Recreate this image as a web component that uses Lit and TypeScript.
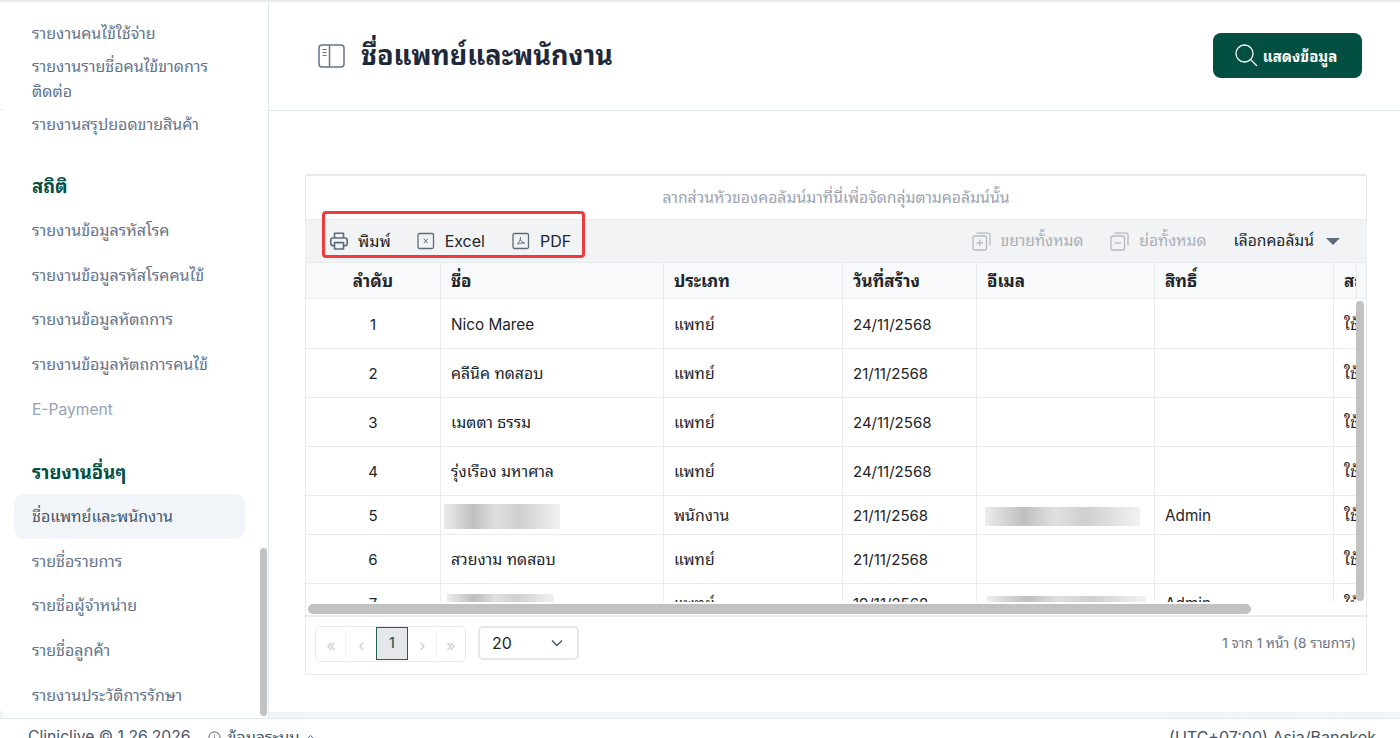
import { LitElement, html, css, svg } from "lit";
import { customElement } from "lit/decorators.js";

const printer = svg`<svg class="ic" viewBox="0 0 20 20" width="20" height="20" fill="none" stroke="#5f6b7a" stroke-width="1.6" stroke-linejoin="round"><path d="M5.500 7V2.200h9V7"/><rect x="1.800" y="7" width="16.400" height="7.600" rx="2"/><rect x="5.500" y="11.600" width="9" height="6.400" fill="#f1f3f5"/></svg>`;
const excel = svg`<svg class="ic" viewBox="0 0 18 18" width="18" height="18" fill="none" stroke="#5f6b7a" stroke-width="1.3"><rect x="1" y="1.500" width="15.500" height="15" rx="1.500"/><path d="M6.800 6.800l4 4.400M10.800 6.800l-4 4.400" stroke-width="1"/></svg>`;
const pdf = svg`<svg class="ic" viewBox="0 0 18 18" width="18" height="18" fill="none" stroke="#5f6b7a" stroke-width="1.3"><rect x="1" y="1.500" width="15.500" height="15" rx="1.500"/><path d="M8.400 5c.5 2.600-1.400 6-3.400 7.200M8.400 7.500c.8 2 2.300 3.300 4.300 3.500-2-.2-4.400.2-6.600 1" stroke-width="1"/></svg>`;
const expand = svg`<svg class="ic" viewBox="0 0 19 19" width="19" height="19" fill="none" stroke="#b4bac1" stroke-width="1.3"><rect x="1" y="4" width="13.500" height="14" rx="1.500"/><path d="M4.500 1.200h12.300a1.200 1.200 0 0 1 1.200 1.200v11"/><path d="M4.500 11h6.500M7.750 7.800v6.400"/></svg>`;
const collapse = svg`<svg class="ic" viewBox="0 0 19 19" width="19" height="19" fill="none" stroke="#b4bac1" stroke-width="1.3"><rect x="1" y="4" width="13.500" height="14" rx="1.500"/><path d="M4.500 1.200h12.300a1.200 1.200 0 0 1 1.200 1.200v11"/><path d="M4.500 11h6.500"/></svg>`;

const group1 = ["รายงานคนไข้ใช้จ่าย", "รายงานรายชื่อคนไข้ขาดการติดต่อ", "รายงานสรุปยอดขายสินค้า"];
const group2 = ["รายงานข้อมูลรหัสโรค", "รายงานข้อมูลรหัสโรคคนไข้", "รายงานข้อมูลหัตถการ", "รายงานข้อมูลหัตถการคนไข้"];
const group3 = ["รายชื่อรายการ", "รายชื่อผู้จำหน่าย", "รายชื่อลูกค้า", "รายงานประวัติการรักษา"];

type Row = { n: number; name: string; type: string; date: string; role: string; h: number; blur?: boolean };
const rows: Row[] = [
  { n: 1, name: "Nico Maree", type: "แพทย์", date: "24/11/2568", role: "", h: 50 },
  { n: 2, name: "คลีนิค ทดสอบ", type: "แพทย์", date: "21/11/2568", role: "", h: 49 },
  { n: 3, name: "เมตตา ธรรม", type: "แพทย์", date: "24/11/2568", role: "", h: 49 },
  { n: 4, name: "รุ่งเรือง มหาศาล", type: "แพทย์", date: "24/11/2568", role: "", h: 49 },
  { n: 5, name: "", type: "พนักงาน", date: "21/11/2568", role: "Admin", h: 39, blur: true },
  { n: 6, name: "สวยงาม ทดสอบ", type: "แพทย์", date: "21/11/2568", role: "", h: 49 },
  { n: 7, name: "", type: "แพทย์", date: "19/11/2568", role: "Admin", h: 39, blur: true },
];

@customElement("app-root")
export class AppRoot extends LitElement {
  static styles = css`
    :host { display: block; width: 1400px; height: 738px; overflow: hidden; background: #fff;
      font-family: Inter, "Noto Sans Thai Looped", "Noto Sans", sans-serif; font-size: 15px; color: #212529; }
    .app { display: flex; flex-direction: column; height: 738px; }
    .top { height: 2px; flex: none; background: #e9eaec; }
    .mid { display: flex; height: 716px; flex: none; }
    .side { width: 268px; flex: none; border-right: 1px solid #e2e8f0; position: relative; overflow: hidden; }
    .side::before { content: ""; position: absolute; left: 0; top: 107px; width: 3px; height: 1px; background: #e2e8f0; }
    .side::after { content: ""; position: absolute; left: 0; top: 709px; width: 3px; height: 7px; background: #f1f5f9; }
    .thumb-s { position: absolute; left: 260px; top: 546px; width: 7px; height: 168px; border-radius: 4px; background: #c1c1c1; }
    .g1 { padding: 15px 0 5px; }
    .it { margin: 0 23px 0 14px; padding: 0 18px; line-height: 25px; color: #64748b; font-size: 16px; }
    .it.dense { padding-top: 4px; padding-bottom: 4px; }
    .it.norm { padding-top: 9.900px; padding-bottom: 9.900px; }
    .it.act { background: #f1f5f9; border-radius: 10px; color: #475569; }
    .it.dis { color: #94a3b8; font-size: 15.600px; }
    .hd { margin: 28.500px 0 9.500px 32px; line-height: 24px; font-size: 18.500px; font-weight: 700; color: #034f42; }
    .hd.first { margin-top: 27.500px; margin-bottom: 10.500px; }
    .main { flex: 1; min-width: 0; display: flex; flex-direction: column; }
    .head { height: 109px; flex: none; box-sizing: border-box; border-bottom: 1px solid #e2e8f0; display: flex; align-items: center; padding: 0 38px 0 49px; }
    .head h1 { margin: 0 0 0 16px; font-size: 27px; font-weight: 700; color: #1e293b; line-height: 32px; }
    .btn { margin: 0 0 2px auto; width: 149px; height: 45px; box-sizing: border-box; padding-right: 4px; border-radius: 8px; background: #034f42; color: #fff; display: flex; align-items: center; justify-content: center; gap: 5px; font-weight: 700; font-size: 15px; }
    .body { flex: 1; padding: 63px 33px 0 36px; }
    .card { height: 501px; box-sizing: border-box; border: 1px solid #e9ecef; border-top-width: 2px; position: relative; display: flex; flex-direction: column; }
    .strip { height: 6px; flex: none; background: #f1f5f9; }
    .grp { height: 44px; flex: none; box-sizing: border-box; display: flex; align-items: center; justify-content: center; color: #9ca3af; font-size: 15.750px; border-bottom: 1px solid #e9ecef; line-height: 24px; }
    .tb { height: 42px; flex: none; background: #f1f3f5; display: flex; align-items: center; padding: 0 26px 0 23px; font-size: 16px; color: #212529; line-height: 24px; }
    .ic { flex: none; display: block; }
    .t { display: flex; align-items: center; gap: 10px; }
    .t.p { gap: 9px; margin-right: 26px; }
    .t.x { margin-right: 27px; }
    .t.e { margin-left: auto; margin-right: 27px; color: #a9afb7; font-size: 15.600px; }
    .t.c { margin-right: 27px; color: #a9afb7; font-size: 15.600px; }
    .t.s { font-size: 15.600px; gap: 10px; }
    .caret { width: 0; height: 0; border-left: 7px solid transparent; border-right: 7px solid transparent; border-top: 7px solid #5f6b7a; margin-left: 2px; }
    .wrap { height: 340px; flex: none; overflow: hidden; position: relative; width: 1050px; line-height: 24px; }
    .row { display: grid; grid-template-columns: 135px 223px 179px 134px 178px 179px 100px; width: 1128px; box-sizing: border-box; font-size: 15.800px; }
    .row > div { box-sizing: border-box; border-right: 1px solid #e9ecef; border-bottom: 1px solid #e9ecef; padding: 2px 0 0 10px; display: flex; align-items: center; white-space: nowrap; overflow: hidden; }
    .row > div.ctr { justify-content: center; padding-left: 0; }
    .row > div.la { font-size: 15px; }
    .row > div.la2 { font-size: 15.300px; }
    .row.th { height: 37px; background: #f8f9fa; border-top: 1px solid #e9ecef; font-weight: 700; color: #212529; font-size: 17px; }
    .row.th > div { padding-top: 0; }
    .blur { background: linear-gradient(90deg, #ececec, #bfbfbf 25%, #e0e0e0 45%, #cfcfcf 65%, #f2f2f2); }
    .b1 { width: 116px; height: 25px; margin-left: -7px; }
    .b2 { width: 155px; height: 19px; margin-left: -2px; }
    .b3 { width: 107px; height: 20px; margin-left: -4px; }
    .b4 { width: 159px; height: 20px; margin-top: 4px; }
    .hbar { height: 15px; flex: none; box-sizing: border-box; position: relative; border-bottom: 2px solid #e9ecef; background: #fff; }
    .hbar i { position: absolute; left: 2px; top: 2px; width: 943px; height: 10px; border-radius: 5px; background: #c1c1c1; }
    .vbar { position: absolute; right: 2px; top: 125px; width: 8px; height: 300px; background: #c1c1c1; border-radius: 4px; }
    .gut2 { position: absolute; left: 1050px; top: 86px; width: 10px; height: 37px; background: #f8f9fa; border-left: 1px solid #e9ecef; border-top: 1px solid #e9ecef; border-bottom: 1px solid #e9ecef; box-sizing: border-box; }
    .foot { flex: 1; display: flex; align-items: flex-start; padding: 9px 10px 0 9px; }
    .pager { display: flex; width: 151px; height: 36px; border: 1px solid #e9ecef; border-radius: 5px; box-sizing: border-box; }
    .pager span { flex: 1; display: flex; align-items: center; justify-content: center; color: #c9ced4; font-size: 16px; padding-top: 2px; box-sizing: border-box; position: relative; }
    .pager span.w { flex: none; width: 30px; }
    .pager span.sep::after { content: ""; position: absolute; right: 0; top: 3px; bottom: 3px; width: 1px; background: #eef0f2; }
    .pager span.cur { flex: none; width: 32px; height: 33px; background: #e5e7eb; border: 1px solid #1f5f50; color: #1f5f50; font-weight: 500; font-size: 14px; padding: 0 0 3px; }
    .sel { margin-left: 12px; width: 101px; height: 34px; box-sizing: border-box; border: 2px solid #e5e7eb; border-radius: 5px; display: flex; align-items: center; justify-content: space-between; padding: 0 14px 0 12px; font-size: 16px; color: #212529; }
    .info { margin-left: auto; color: #6b7280; font-size: 13.600px; line-height: 34px; }
    .ft { height: 20px; flex: none; box-sizing: border-box; border-top: 1px solid #e2e8f0; display: flex; padding: 6px 24px 0 28px; color: #475569; font-size: 16px; line-height: 24px; overflow: hidden; white-space: nowrap; }
    .ft .cp { font-size: 15.700px; }
    .ft .sys { display: flex; align-items: center; height: 24px; gap: 6px; margin-left: 18px; font-size: 16px; }
    .ft .tz { margin-left: auto; }
    .hl { position: absolute; left: 16px; top: 35px; width: 263px; height: 47px; box-sizing: border-box; border: 3px solid #ef3b3b; border-radius: 4px; pointer-events: none; }
  `;

  item(t: string, cls: string) {
    return html`<div class="it ${cls}">${t}</div>`;
  }

  row(r: Row) {
    return html`<div class="row" style="height:${r.h}px">
      <div class="ctr la">${r.n}</div>
      <div class="${r.n === 1 ? "la2" : ""}">${r.blur ? html`<div class="blur ${r.n === 5 ? "b1" : "b3"}"></div>` : r.name}</div>
      <div>${r.type}</div>
      <div class="la">${r.date}</div>
      <div>${r.blur ? html`<div class="blur ${r.n === 5 ? "b2" : "b4"}"></div>` : ""}</div>
      <div class="la2">${r.role}</div>
      <div>ใช้งาน</div>
    </div>`;
  }

  render() {
    return html`<div class="app">
      <div class="top"></div>
      <div class="mid">
        <aside class="side">
          <div class="g1">${group1.map((t) => this.item(t, "dense"))}</div>
          <div class="hd first">สถิติ</div>
          ${group2.map((t) => this.item(t, "norm"))}
          ${this.item("E-Payment", "norm dis")}
          <div class="hd">รายงานอื่นๆ</div>
          ${this.item("ชื่อแพทย์และพนักงาน", "norm act")}
          ${group3.map((t) => this.item(t, "norm"))}
          <div class="thumb-s"></div>
        </aside>
        <main class="main">
          <header class="head">
            <svg viewBox="0 0 27 24" width="27" height="24" fill="none" stroke="#64748b" class="ic">
              <rect x="1" y="1" width="25" height="22" rx="3" stroke-width="1.500"/>
              <path d="M11.500 1v22" stroke-width="1.500"/>
              <path d="M4.500 5.500h4M4.500 8.500h4M4.500 11.500h4" stroke-width="1"/>
            </svg>
            <h1>ชื่อแพทย์และพนักงาน</h1>
            <div class="btn">
              <svg viewBox="0 0 24 24" width="24" height="24" fill="none" stroke="#fff" stroke-width="1.300" class="ic">
                <circle cx="10.500" cy="10.500" r="8.500"/><path d="M16.500 16.500L23 23"/>
              </svg>
              <span>แสดงข้อมูล</span>
            </div>
          </header>
          <div class="body">
            <section class="card">
              <div class="grp">ลากส่วนหัวของคอลัมน์มาที่นี่เพื่อจัดกลุ่มตามคอลัมน์นั้น</div>
              <div class="tb">
                <div class="t p">${printer}<span>พิมพ์</span></div>
                <div class="t x">${excel}<span>Excel</span></div>
                <div class="t">${pdf}<span>PDF</span></div>
                <div class="t e">${expand}<span>ขยายทั้งหมด</span></div>
                <div class="t c">${collapse}<span>ย่อทั้งหมด</span></div>
                <div class="t s"><span style="color:#212529">เลือกคอลัมน์</span><i class="caret"></i></div>
              </div>
              <div class="wrap">
                <div class="row th">
                  <div class="ctr">ลำดับ</div><div>ชื่อ</div><div>ประเภท</div><div>วันที่สร้าง</div><div>อีเมล</div><div>สิทธิ์</div><div>สถานะ</div>
                </div>
                ${rows.map((r) => this.row(r))}
              </div>
              <div class="gut2"></div>
              <div class="vbar"></div>
              <div class="hbar"><i></i></div>
              <div class="foot">
                <div class="pager">
                  <span class="sep w">«</span><span class="w">‹</span><span class="cur">1</span><span class="sep">›</span><span>»</span>
                </div>
                <div class="sel"><span>20</span>
                  <svg viewBox="0 0 12 8" width="12" height="8" fill="none" stroke="#475569" stroke-width="1.400" class="ic"><path d="M1 1.500l5 5 5-5"/></svg>
                </div>
                <div class="info">1 จาก 1 หน้า (8 รายการ)</div>
              </div>
              <div class="hl"></div>
            </section>
          </div>
          <div class="strip"></div>
        </main>
      </div>
      <footer class="ft">
        <span class="cp">Cliniclive © 1.26.2026</span>
        <span class="sys">
          <svg viewBox="0 0 14 14" width="13" height="13" fill="none" stroke="#475569" stroke-width="1" class="ic"><circle cx="7" cy="7" r="6"/><path d="M7 6v4M7 3.800v1"/></svg>
          ข้อมูลระบบ
          <svg viewBox="0 0 10 8" width="9" height="7" fill="none" stroke="#475569" stroke-width="1" class="ic"><path d="M1 6l4-4.500L9 6z"/></svg>
        </span>
        <span class="tz">(UTC+07:00) Asia/Bangkok</span>
      </footer>
    </div>`;
  }
}
